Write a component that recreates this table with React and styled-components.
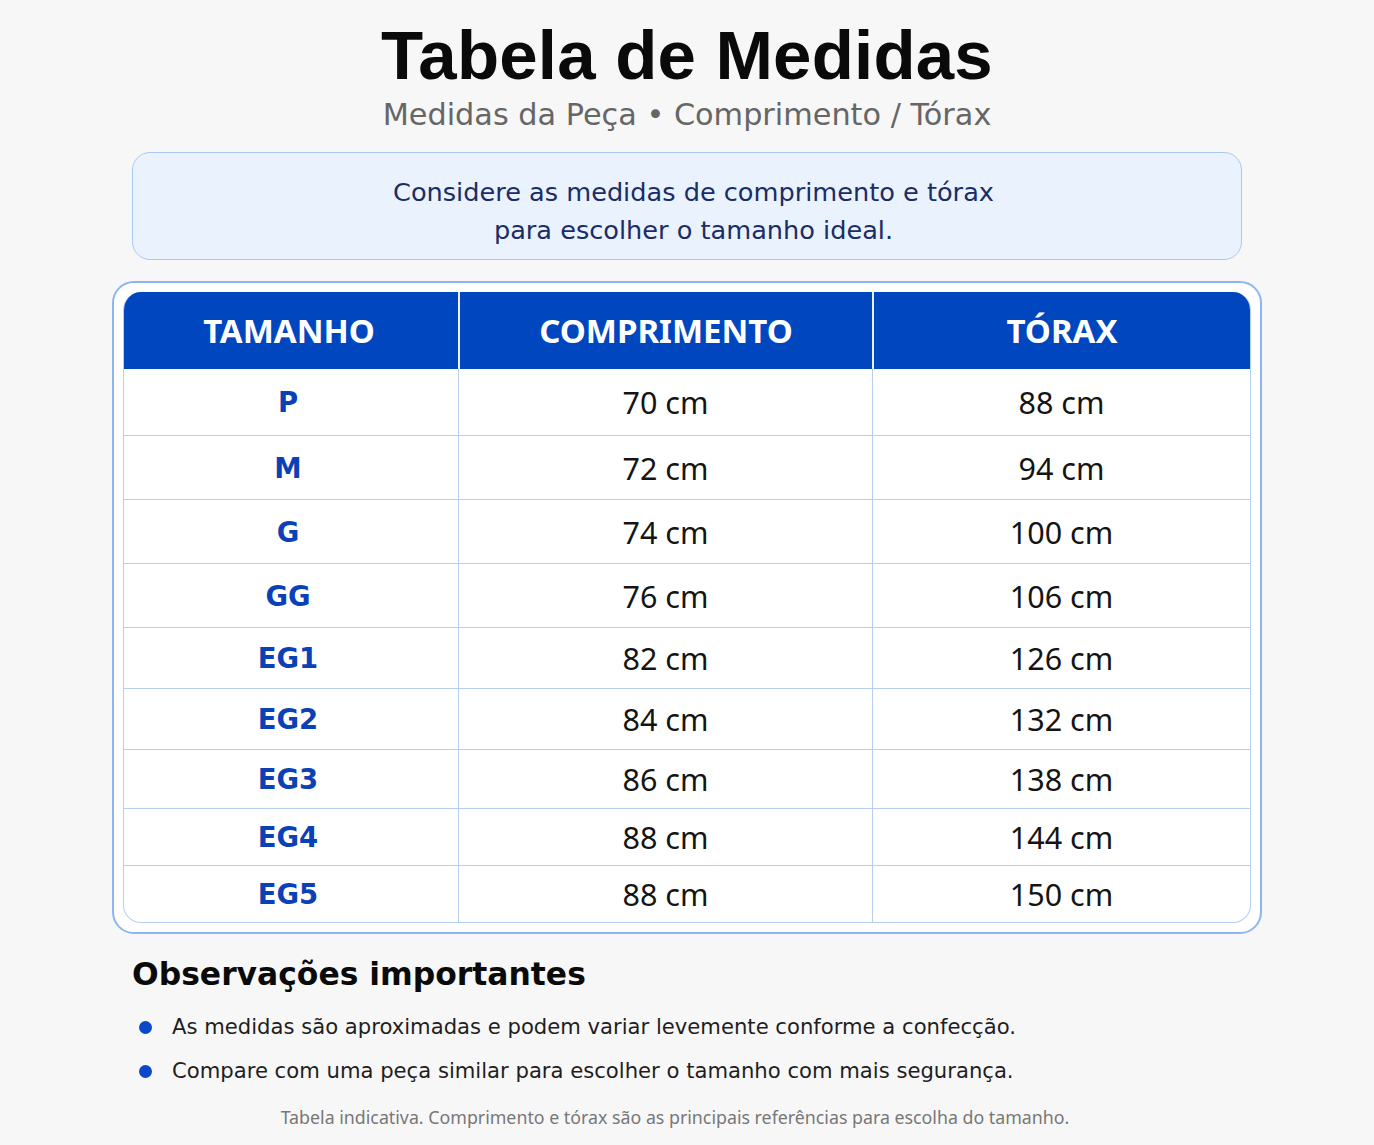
import React from "react";
import styled, { createGlobalStyle } from "styled-components";

const Global = createGlobalStyle`
  html, body { margin: 0; padding: 0; background: #f7f7f7; }
  body { font-family: "Noto Sans", "DejaVu Sans", sans-serif; color: #111; }
`;

const Page = styled.div`
  width: 1374px;
  min-height: 1145px;
  box-sizing: border-box;
  padding-top: 16px;
  display: flex;
  flex-direction: column;
  align-items: center;
`;

const Title = styled.h1`
  margin: 0;
  font-family: "Liberation Sans", Arial, sans-serif;
  font-weight: 700;
  font-size: 69px;
  line-height: 80px;
  color: #0a0a0a;
  letter-spacing: 0.2px;
`;

const Subtitle = styled.div`
  margin-top: -1px;
  font-family: "DejaVu Sans", sans-serif;
  font-size: 30.3px;
  line-height: 40px;
  color: #666;
`;

const InfoBox = styled.div`
  margin-top: 17px;
  width: 1110px;
  height: 108px;
  box-sizing: border-box;
  padding: 9px 0 0 13px;
  border: 1.5px solid #a9c9f2;
  border-radius: 18px;
  background: #e9f2fd;
  display: flex;
  flex-direction: column;
  align-items: center;
  justify-content: center;
  color: #1a2d66;
  font-family: "DejaVu Sans", sans-serif;
  font-size: 25.6px;
  line-height: 38px;
  text-align: center;
`;

const TableFrame = styled.div`
  margin-top: 21px;
  width: 1150px;
  box-sizing: border-box;
  border: 2px solid #8db6f0;
  border-radius: 22px;
  background: #fff;
  padding: 9px;
`;

const Table = styled.div`
  border: 1.5px solid #b6cff1;
  border-top: none;
  border-radius: 18px;
  overflow: hidden;
  display: grid;
  grid-template-columns: 334px 414px 1fr;
`;

const HeadCell = styled.div`
  height: 77px;
  background: #0047bf;
  color: #fff;
  font-weight: 700;
  font-size: 33px;
  display: flex;
  align-items: center;
  justify-content: center;
  box-sizing: border-box;
  padding-right: ${(p) => (p.$first ? "4px" : "0")};
  border-left: ${(p) => (p.$first ? "none" : "2px solid #e8efff")};
`;

const Cell = styled.div`
  height: ${(p) => p.$h}px;
  display: flex;
  align-items: center;
  justify-content: center;
  font-family: ${(p) => (p.$size ? '"DejaVu Sans", sans-serif' : '"Noto Sans", sans-serif')};
  font-size: ${(p) => (p.$size ? "27.5px" : "30.5px")};
  color: ${(p) => (p.$size ? "#0b41b6" : "#141414")};
  font-weight: ${(p) => (p.$size ? 700 : 400)};
  padding-right: ${(p) => (p.$size ? "6px" : "0")};
  border-top: ${(p) => (p.$top ? "none" : "1.5px solid #b6cff1")};
  border-left: ${(p) => (p.$first ? "none" : "1.5px solid #b6cff1")};
  box-sizing: border-box;
`;

const Notes = styled.div`
  width: 1110px;
  margin-top: 20px;
`;

const NotesTitle = styled.h2`
  margin: 0;
  font-family: "DejaVu Sans", sans-serif;
  font-weight: 700;
  font-size: 31.4px;
  line-height: 40px;
  color: #0a0a0a;
`;

const List = styled.ul`
  list-style: none;
  margin: 17px 0 0 0;
  padding: 0;
  display: flex;
  flex-direction: column;
  gap: 12px;
`;

const Item = styled.li`
  display: flex;
  align-items: center;
  gap: 20px;
  font-family: "DejaVu Sans", sans-serif;
  font-size: 21.15px;
  line-height: 32px;
  color: #1e1e1e;
  padding-left: 7px;
`;

const Dot = styled.span`
  width: 13px;
  height: 13px;
  border-radius: 50%;
  background: #0b47c8;
  flex: none;
`;

const Footer = styled.div`
  margin-top: 18px;
  padding-right: 24px;
  font-family: "Noto Sans", sans-serif;
  font-size: 17.8px;
  color: #777;
`;

const rows = [
  ["P", "70 cm", "88 cm", 66],
  ["M", "72 cm", "94 cm", 64],
  ["G", "74 cm", "100 cm", 64],
  ["GG", "76 cm", "106 cm", 64],
  ["EG1", "82 cm", "126 cm", 61],
  ["EG2", "84 cm", "132 cm", 61],
  ["EG3", "86 cm", "138 cm", 59],
  ["EG4", "88 cm", "144 cm", 57],
  ["EG5", "88 cm", "150 cm", 57],
];

export default function App() {
  return (
    <>
      <Global />
      <Page>
        <Title>Tabela de Medidas</Title>
        <Subtitle>Medidas da Peça • Comprimento / Tórax</Subtitle>
        <InfoBox>
          <div>Considere as medidas de comprimento e tórax</div>
          <div>para escolher o tamanho ideal.</div>
        </InfoBox>
        <TableFrame>
          <Table>
            <HeadCell $first>TAMANHO</HeadCell>
            <HeadCell>COMPRIMENTO</HeadCell>
            <HeadCell>TÓRAX</HeadCell>
            {rows.map(([s, c, t, h], i) => (
              <React.Fragment key={s}>
                <Cell $h={h} $first $size $top={i === 0}>{s}</Cell>
                <Cell $h={h} $top={i === 0}>{c}</Cell>
                <Cell $h={h} $top={i === 0}>{t}</Cell>
              </React.Fragment>
            ))}
          </Table>
        </TableFrame>
        <Notes>
          <NotesTitle>Observações importantes</NotesTitle>
          <List>
            <Item><Dot />As medidas são aproximadas e podem variar levemente conforme a confecção.</Item>
            <Item><Dot />Compare com uma peça similar para escolher o tamanho com mais segurança.</Item>
          </List>
        </Notes>
        <Footer>Tabela indicativa. Comprimento e tórax são as principais referências para escolha do tamanho.</Footer>
      </Page>
    </>
  );
}
